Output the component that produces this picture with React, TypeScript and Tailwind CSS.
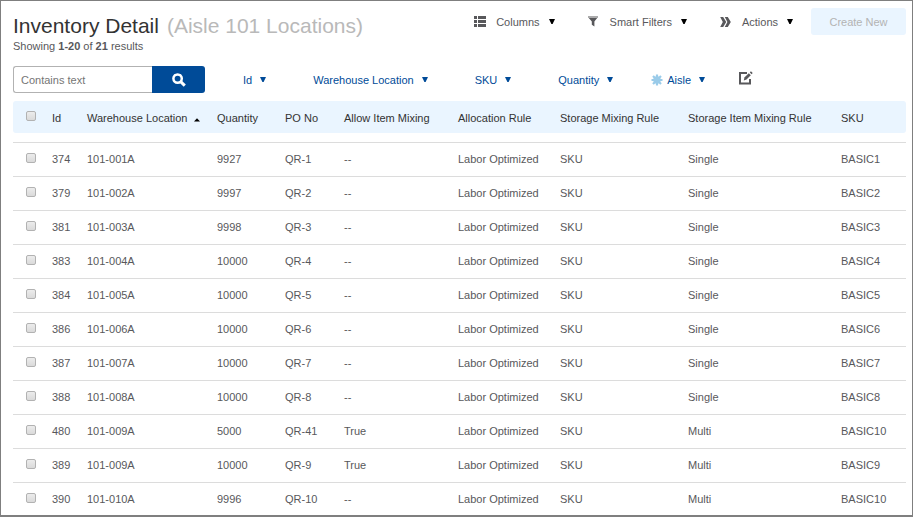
import type { ReactNode } from "react";

type Row = {
  id: string;
  location: string;
  quantity: string;
  po: string;
  mixing: string;
  itemRule: string;
  sku: string;
};

const rows: Row[] = [
  { id: "374", location: "101-001A", quantity: "9927", po: "QR-1", mixing: "--", itemRule: "Single", sku: "BASIC1" },
  { id: "379", location: "101-002A", quantity: "9997", po: "QR-2", mixing: "--", itemRule: "Single", sku: "BASIC2" },
  { id: "381", location: "101-003A", quantity: "9998", po: "QR-3", mixing: "--", itemRule: "Single", sku: "BASIC3" },
  { id: "383", location: "101-004A", quantity: "10000", po: "QR-4", mixing: "--", itemRule: "Single", sku: "BASIC4" },
  { id: "384", location: "101-005A", quantity: "10000", po: "QR-5", mixing: "--", itemRule: "Single", sku: "BASIC5" },
  { id: "386", location: "101-006A", quantity: "10000", po: "QR-6", mixing: "--", itemRule: "Single", sku: "BASIC6" },
  { id: "387", location: "101-007A", quantity: "10000", po: "QR-7", mixing: "--", itemRule: "Single", sku: "BASIC7" },
  { id: "388", location: "101-008A", quantity: "10000", po: "QR-8", mixing: "--", itemRule: "Single", sku: "BASIC8" },
  { id: "480", location: "101-009A", quantity: "5000", po: "QR-41", mixing: "True", itemRule: "Multi", sku: "BASIC10" },
  { id: "389", location: "101-009A", quantity: "10000", po: "QR-9", mixing: "True", itemRule: "Multi", sku: "BASIC9" },
  { id: "390", location: "101-010A", quantity: "9996", po: "QR-10", mixing: "--", itemRule: "Multi", sku: "BASIC10" },
];

function Caret() {
  return (
    <svg viewBox="0 0 6 5" className="h-[5px] w-[6px] shrink-0 fill-current" aria-hidden="true">
      <path d="M0 0h6L3.6 5H2.4z" />
    </svg>
  );
}

function ListIcon() {
  return (
    <svg viewBox="0 0 12 11" className="h-[11px] w-[12px] fill-current" aria-hidden="true">
      <path d="M0 0h3v3H0zM4 0h8v3H4zM0 4h3v3H0zM4 4h8v3H4zM0 8h3v3H0zM4 8h8v3H4z" />
    </svg>
  );
}

function FunnelIcon() {
  return (
    <svg viewBox="0 0 10 11" className="h-[11px] w-[10px] fill-current" aria-hidden="true">
      <path d="M0 0.4h10v1H0zM0.8 2h8.4L6.4 5.6V10.6L3.8 8.8V5.6z" />
    </svg>
  );
}

function ChevronsIcon() {
  return (
    <svg viewBox="0 0 11 10" className="h-[10px] w-[11px] fill-current" aria-hidden="true">
      <path d="M0.2 0h3L6.2 5l-3 5h-3l2.6-5zM4.8 0h3L10.8 5l-3 5h-3l2.6-5z" />
    </svg>
  );
}

function SearchIcon() {
  return (
    <svg viewBox="0 0 14 14" className="size-[14px]" fill="none" stroke="currentColor" aria-hidden="true">
      <circle cx="5.6" cy="5.6" r="4.2" strokeWidth="2.5" />
      <path d="M8.6 8.6l4.2 4" strokeWidth="3" />
    </svg>
  );
}

function BurstIcon() {
  return (
    <svg viewBox="0 0 12 12" className="size-[12px]" stroke="#9acbe9" strokeWidth="2.2" aria-hidden="true">
      <path d="M6 0.5v11M0.5 6h11M2 2l8 8M10 2l-8 8" />
      <circle cx="6" cy="6" r="2.6" fill="#9acbe9" />
    </svg>
  );
}

function EditIcon() {
  return (
    <svg viewBox="0 0 14 14" className="size-[14px]" fill="none" stroke="currentColor" aria-hidden="true">
      <path d="M8 2H1v10.5h10V8" strokeWidth="2" />
      <path d="M4.8 9.4l.6-2.9L9.8 2.2l2 2L7.5 8.6z" fill="currentColor" stroke="none" />
      <path d="M10.8 1.4l1.1-1.1 1.8 1.8-1.1 1.1z" fill="currentColor" stroke="none" />
    </svg>
  );
}

function ToolbarButton({ icon, label }: { icon: ReactNode; label: string }) {
  return (
    <button type="button" aria-haspopup="menu" className="flex items-center text-[#58585b]">
      <span className="w-[22px]">{icon}</span>
      <span className="mr-[9px] whitespace-nowrap">{label}</span>
      <span className="text-black">
        <Caret />
      </span>
    </button>
  );
}

function FilterButton({ label, icon }: { label: string; icon?: ReactNode }) {
  return (
    <button type="button" aria-haspopup="menu" className="flex items-center gap-2 whitespace-nowrap text-[#004b98]">
      <span className="flex items-center gap-1">
        {icon}
        {label}
      </span>
      <Caret />
    </button>
  );
}

function Checkbox({ label }: { label: string }) {
  return (
    <input
      type="checkbox"
      aria-label={label}
      className="block size-[10px] appearance-none rounded-[2px] border border-[#b2b2b2] bg-linear-to-b from-[#ececec] to-[#dadada] checked:bg-[#004b98]"
    />
  );
}

export default function App() {
  return (
    <main className="min-h-screen border border-b-2 border-[#7f7f7f] bg-white pl-3 pr-[6px] font-['Liberation_Sans',Arial,sans-serif] text-[11px] leading-[14px] text-[#58585b]">
      <header className="flex items-start justify-between pt-[7px]">
        <div className="pt-[6px]">
          <h1 className="mb-px flex gap-2 whitespace-nowrap text-[21px] leading-6 text-[#333333]">
            Inventory Detail <span className="text-[#b9b9b9]">(Aisle 101 Locations)</span>
          </h1>
          <p>
            Showing <b>1-20</b> of <b>21</b> results
          </p>
        </div>
        <div className="flex items-center">
          <div className="mr-[18px] flex gap-[33px]">
            <ToolbarButton icon={<ListIcon />} label="Columns" />
            <ToolbarButton icon={<FunnelIcon />} label="Smart Filters" />
            <ToolbarButton icon={<ChevronsIcon />} label="Actions" />
          </div>
          <button type="button" disabled className="h-[27px] w-[95px] rounded-[3px] bg-[#eaf5ff] text-[#b3b3b3]">
            Create New
          </button>
        </div>
      </header>

      <div className="mt-[13px] flex items-center">
        <form className="flex h-[27px]" onSubmit={(event) => event.preventDefault()}>
          <input
            type="text"
            aria-label="Contains text"
            placeholder="Contains text"
            className="w-[139px] rounded-l-[3px] border border-r-0 border-[#b2b2b2] px-[7px] outline-none placeholder:text-[#757575]"
          />
          <button
            type="submit"
            aria-label="Search"
            className="flex w-[53px] items-center justify-center rounded-r-[3px] bg-[#004b98] text-white"
          >
            <SearchIcon />
          </button>
        </form>
        <div className="ml-[38px] flex items-center gap-[47px]">
          <FilterButton label="Id" />
          <FilterButton label="Warehouse Location" />
          <FilterButton label="SKU" />
          <FilterButton label="Quantity" />
        </div>
        <div className="ml-[38px] flex items-center gap-[34px]">
          <FilterButton label="Aisle" icon={<BurstIcon />} />
          <button type="button" aria-label="Edit filters" className="pb-1 text-[#58585b]">
            <EditIcon />
          </button>
        </div>
      </div>

      <table className="mt-2 w-full table-fixed border-separate border-spacing-0 whitespace-nowrap text-left">
        <colgroup>
          <col className="w-[39px]" />
          <col className="w-[35px]" />
          <col className="w-[130px]" />
          <col className="w-[68px]" />
          <col className="w-[59px]" />
          <col className="w-[114px]" />
          <col className="w-[102px]" />
          <col className="w-[128px]" />
          <col className="w-[153px]" />
          <col className="w-[65px]" />
        </colgroup>
        <thead className="text-[#333333]">
          <tr className="h-8 *:bg-[#eaf5ff] *:p-0 *:pt-[10px] *:align-top *:font-normal">
            <th scope="col" className="rounded-l-[3px]">
              <div className="pl-[13px]">
                <Checkbox label="Select all" />
              </div>
            </th>
            <th scope="col">Id</th>
            <th scope="col" aria-sort="ascending">
              <span className="flex items-center gap-[6px]">
                Warehouse Location
                <svg viewBox="0 0 6 4" className="mt-[3px] h-[4px] w-[6px] fill-black" aria-hidden="true">
                  <path d="M3 0.2L6 3.6H0z" />
                </svg>
              </span>
            </th>
            <th scope="col">Quantity</th>
            <th scope="col">PO No</th>
            <th scope="col">Allow Item Mixing</th>
            <th scope="col">Allocation Rule</th>
            <th scope="col">Storage Mixing Rule</th>
            <th scope="col">Storage Item Mixing Rule</th>
            <th scope="col" className="rounded-r-[3px]">SKU</th>
          </tr>
        </thead>
        <tbody className="before:block before:h-[9px] before:content-['']">
          {rows.map((row) => (
            <tr
              key={row.id}
              className="h-[34px] *:border-t *:border-[#dcdcdc] *:p-0 *:pt-[9px] *:align-top last:h-8"
            >
              <td>
                <div className="pl-[13px] pt-px">
                  <Checkbox label={`Select ${row.id}`} />
                </div>
              </td>
              <td>{row.id}</td>
              <td>{row.location}</td>
              <td>{row.quantity}</td>
              <td>{row.po}</td>
              <td>{row.mixing}</td>
              <td>Labor Optimized</td>
              <td>SKU</td>
              <td>{row.itemRule}</td>
              <td>{row.sku}</td>
            </tr>
          ))}
        </tbody>
      </table>
    </main>
  );
}
